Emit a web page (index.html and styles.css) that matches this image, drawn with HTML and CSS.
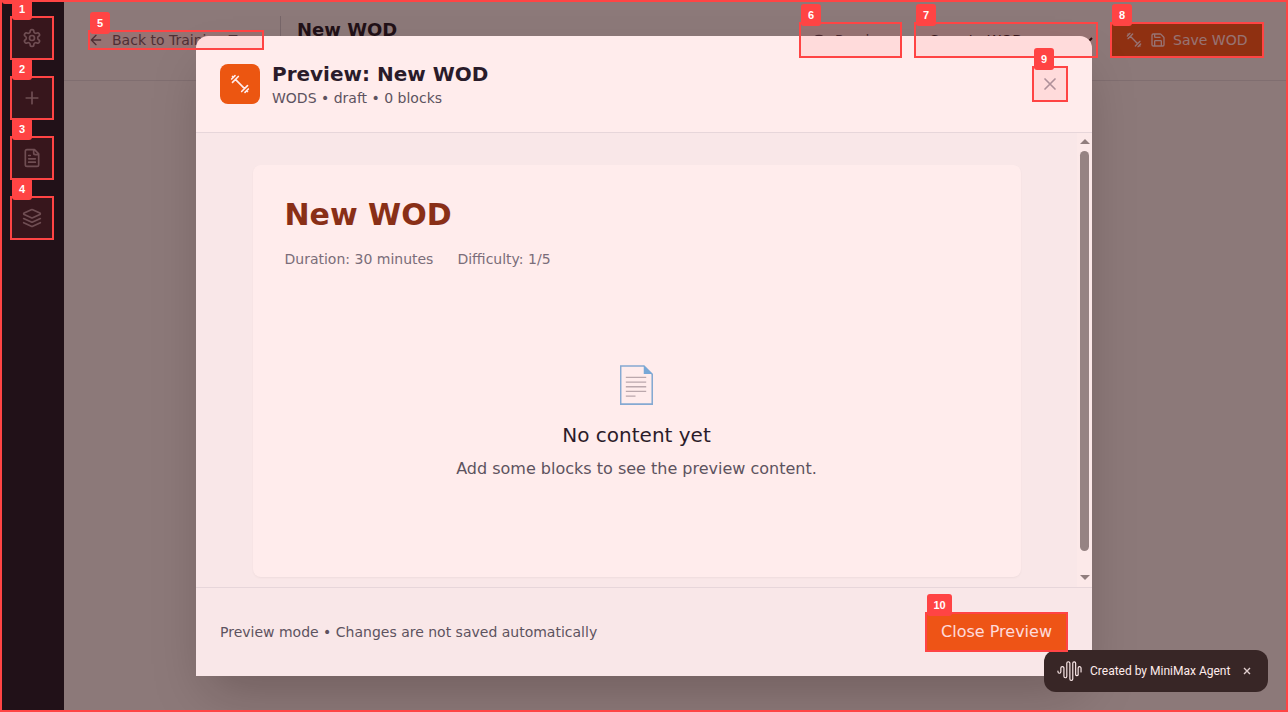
FILE: index.html
```html
<!DOCTYPE html>
<html lang="en">
<head>
<meta charset="utf-8">
<title>New WOD</title>
<link rel="stylesheet" href="styles.css">
</head>
<body>
<svg class="defs" width="0" height="0">
  <symbol id="dumbbell" viewBox="0 0 24 24"><path d="m6.5 6.5 11 11M21 21l-1-1M3 3l1 1M18 22l4-4M2 6l4-4M3 10l7-7M14 21l7-7"/></symbol>
  <symbol id="x" viewBox="0 0 24 24"><path d="M18 6 6 18M6 6l12 12"/></symbol>
</svg>
<div class="app">
  <nav class="sidebar">
    <button class="side-btn"><svg class="icon i20" viewBox="0 0 24 24"><path d="M12.22 2h-.44a2 2 0 0 0-2 2v.18a2 2 0 0 1-1 1.73l-.43.25a2 2 0 0 1-2 0l-.15-.08a2 2 0 0 0-2.73.73l-.22.38a2 2 0 0 0 .73 2.73l.15.1a2 2 0 0 1 1 1.72v.51a2 2 0 0 1-1 1.74l-.15.09a2 2 0 0 0-.73 2.73l.22.38a2 2 0 0 0 2.73.73l.15-.08a2 2 0 0 1 2 0l.43.25a2 2 0 0 1 1 1.73V20a2 2 0 0 0 2 2h.44a2 2 0 0 0 2-2v-.18a2 2 0 0 1 1-1.73l.43-.25a2 2 0 0 1 2 0l.15.08a2 2 0 0 0 2.73-.73l.22-.39a2 2 0 0 0-.73-2.73l-.15-.08a2 2 0 0 1-1-1.74v-.5a2 2 0 0 1 1-1.74l.15-.09a2 2 0 0 0 .73-2.73l-.22-.38a2 2 0 0 0-2.73-.73l-.15.08a2 2 0 0 1-2 0l-.43-.25a2 2 0 0 1-1-1.73V4a2 2 0 0 0-2-2z"/><circle cx="12" cy="12" r="3"/></svg></button>
    <button class="side-btn"><svg class="icon i20" viewBox="0 0 24 24"><path d="M5 12h14M12 5v14"/></svg></button>
    <button class="side-btn"><svg class="icon i20" viewBox="0 0 24 24"><path d="M15 2H6a2 2 0 0 0-2 2v16a2 2 0 0 0 2 2h12a2 2 0 0 0 2-2V7ZM14 2v4a2 2 0 0 0 2 2h4M10 9H8M16 13H8M16 17H8"/></svg></button>
    <button class="side-btn"><svg class="icon i20" viewBox="0 0 24 24"><path d="m12.83 2.18a2 2 0 0 0-1.66 0L2.6 6.08a1 1 0 0 0 0 1.83l8.58 3.91a2 2 0 0 0 1.66 0l8.58-3.9a1 1 0 0 0 0-1.83ZM22 17.65l-9.17 4.16a2 2 0 0 1-1.66 0L2 17.65M22 12.65l-9.17 4.16a2 2 0 0 1-1.66 0L2 12.65"/></svg></button>
  </nav>
  <div class="main">
    <header class="topbar">
      <a class="back"><svg class="icon i16" viewBox="0 0 24 24"><path d="m12 19-7-7 7-7M19 12H5"/></svg>Back to Training Types</a>
      <span class="divider"></span>
      <h1 class="page-title">New WOD</h1>
      <div class="actions">
        <button class="btn preview-btn"><svg class="icon i16" viewBox="0 0 24 24"><path d="M2 12s3-7 10-7 10 7 10 7-3 7-10 7-10-7-10-7Z"/><circle cx="12" cy="12" r="3"/></svg>Preview</button>
        <button class="btn select-btn">Save to WOD<svg class="chevron" viewBox="0 0 10 6"><path d="m1 1 4 4 4-4"/></svg></button>
        <button class="btn save-btn"><svg class="icon i16"><use href="#dumbbell"/></svg><svg class="icon i16" viewBox="0 0 24 24"><path d="M15.2 3a2 2 0 0 1 1.4.6l3.8 3.8a2 2 0 0 1 .6 1.4V19a2 2 0 0 1-2 2H5a2 2 0 0 1-2-2V5a2 2 0 0 1 2-2zM17 21v-7a1 1 0 0 0-1-1H8a1 1 0 0 0-1 1v7M7 3v4a1 1 0 0 0 1 1h7"/></svg><span class="save-label">Save WOD</span></button>
      </div>
    </header>
  </div>
</div>

<div class="backdrop">
  <section class="modal">
    <header class="modal-head">
      <span class="badge"><svg class="icon i20"><use href="#dumbbell"/></svg></span>
      <div class="modal-titles">
        <h2 class="modal-title">Preview: New WOD</h2>
        <p class="modal-sub">WODS • draft • 0 blocks</p>
      </div>
      <button class="close"><svg class="icon i20"><use href="#x"/></svg></button>
    </header>
    <div class="modal-body">
      <div class="content">
        <article class="card">
          <h3 class="wod-title">New WOD</h3>
          <div class="meta"><span>Duration: 30 minutes</span><span>Difficulty: 1/5</span></div>
          <div class="empty">
            <svg class="page-icon" viewBox="0 0 34 41"><path class="sheet" d="M.7 1h24l8.5 8.5v30.700H.7z"/><path class="fold" d="M24.500.5v8.700h9z"/><path class="rules" d="M6 12.700h21M6 17.500h21M6 22.300h21M6 27.100h21M6 31.900h10"/></svg>
            <h4 class="empty-title">No content yet</h4>
            <p class="empty-text">Add some blocks to see the preview content.</p>
          </div>
        </article>
      </div>
      <div class="scrollbar"><i class="arrow up"></i><i class="thumb"></i><i class="arrow down"></i></div>
    </div>
    <footer class="modal-foot">
      <span>Preview mode • Changes are not saved automatically</span>
      <button class="close-preview">Close Preview</button>
    </footer>
  </section>
</div>

<aside class="agent">
  <svg class="wave" viewBox="0 0 26 22"><path d="M1 11v.8a1.500 1.500 0 0 0 3 0V8a1.600 1.600 0 0 1 3.200 0v8.500a1.500 1.500 0 0 0 3 0V3a1.500 1.500 0 0 1 3.200 0v16.300a1.500 1.500 0 0 0 3 0V17M16.400 17V3a1.500 1.500 0 0 1 3 0v12a1.500 1.500 0 0 0 2.600 0V8a1.500 1.500 0 0 1 3 0v4"/></svg>
  <span>Created by MiniMax Agent</span>
  <svg class="agent-x" viewBox="0 0 8 8"><path d="m1 1 6 6M7 1 1 7"/></svg>
</aside>

<div class="marks">
  <div class="mark m0"><b></b></div>
  <div class="mark m1"><b>1</b></div>
  <div class="mark m2"><b>2</b></div>
  <div class="mark m3"><b>3</b></div>
  <div class="mark m4"><b>4</b></div>
  <div class="mark m5"><b>5</b></div>
  <div class="mark m6"><b>6</b></div>
  <div class="mark m7"><b>7</b></div>
  <div class="mark m8"><b>8</b></div>
  <div class="mark m9"><b>9</b></div>
  <div class="mark m10"><b>10</b></div>
</div>
</body>
</html>
```
FILE: styles.css
```css
* { box-sizing: border-box; margin: 0; }
body { font: 14px/20px "DejaVu Sans", sans-serif; color: #111827; height: 712px; overflow: hidden; position: relative; }
button { border: 0; background: none; padding: 0; font: inherit; color: inherit; }
.defs { position: absolute; }
.icon { fill: none; stroke: currentColor; stroke-width: 2; stroke-linecap: round; stroke-linejoin: round; flex: none; }
.i16 { width: 16px; height: 16px; }
.i20 { width: 20px; height: 20px; }

.app { display: flex; height: 712px; background: #fff; }
.sidebar { width: 64px; background: #111827; display: flex; flex-direction: column; align-items: center; gap: 16px; padding-top: 16px; }
.side-btn { width: 44px; height: 44px; display: grid; place-items: center; color: #9ca3af; }
.main { flex: 1; }
.topbar { height: 81px; border-bottom: 1px solid #e5e7eb; padding: 0 24px; display: flex; align-items: flex-start; white-space: nowrap; }
.back { display: flex; align-items: center; gap: 8px; width: 176px; height: 20px; margin-top: 30px; color: #4b5563; }
.divider { width: 1px; height: 48px; margin: 16px 16px 0; background: #d1d5db; }
.page-title { font-size: 18px; line-height: 28px; font-weight: 700; margin-top: 16px; }
.actions { margin: 22px 0 0 auto; display: flex; gap: 12px; }
.btn { height: 36px; display: flex; align-items: center; gap: 8px; padding: 0 12px; border-radius: 8px; }
.preview-btn { width: 103px; color: #374151; }
.select-btn { width: 184px; padding: 0 5px 0 16px; justify-content: space-between; }
.chevron { width: 10px; height: 6px; fill: none; stroke: #000; stroke-width: 2; }
.save-btn { width: 154px; padding: 0 0 0 16px; background: #ea580c; color: #fff; border-radius: 4px; }
.save-label { margin-left: -1px; }

.backdrop { position: absolute; inset: 0; background: rgba(0,0,0,.5); display: grid; place-items: center; }
.modal { width: 896px; height: 640px; background: #fff; border-radius: 12px 12px 0 0; display: flex; flex-direction: column; box-shadow: 0 25px 50px -12px rgba(0,0,0,.25); }
.modal-head { height: 97px; padding: 24px; border-bottom: 1px solid #e5e7eb; display: flex; align-items: center; gap: 12px; }
.badge { width: 40px; height: 40px; border-radius: 8px; background: #ea580c; color: #fff; display: grid; place-items: center; }
.modal-title { font-size: 20px; line-height: 28px; font-weight: 700; }
.modal-sub { color: #4b5563; }
.close { margin-left: auto; width: 36px; height: 36px; display: grid; place-items: center; color: #9ca3af; }
.modal-body { flex: 1; min-height: 0; display: flex; background: #f9fafb; }
.content { flex: 1; padding-top: 32px; display: flex; justify-content: center; }
.card { width: 768px; height: 412px; padding: 32px; background: #fff; border-radius: 8px; box-shadow: 0 1px 2px rgba(0,0,0,.05); }
.wod-title { font-size: 30px; line-height: 36px; font-weight: 700; color: #7c2d12; }
.meta { display: flex; gap: 24px; margin-top: 16px; color: #6b7280; }
.empty { margin-top: 96px; display: flex; flex-direction: column; align-items: center; }
.page-icon { width: 33px; height: 40px; fill: none; }
.sheet { stroke: #78b5e2; stroke-width: 1.600; }
.fold { fill: #68b4e8; }
.rules { stroke: #b4b4b9; stroke-width: 1.300; }
.empty-title { font-size: 20px; line-height: 28px; font-weight: 400; margin-top: 16px; }
.empty-text { font-size: 16px; line-height: 24px; color: #4b5563; margin-top: 8px; }
.scrollbar { width: 15px; background: #fcfcfc; display: flex; flex-direction: column; align-items: center; padding: 6px 0 7px; }
.arrow { border: 5px solid transparent; }
.up { border-top: 0; border-bottom-color: #858585; }
.down { border-bottom: 0; border-top-color: #858585; margin-top: auto; }
.thumb { width: 9px; height: 400px; margin-top: 7px; border-radius: 5px; background: #8b8b8b; }
.modal-foot { height: 89px; padding: 0 24px; border-top: 1px solid #e5e7eb; background: #f9fafb; display: flex; align-items: center; justify-content: space-between; color: #4b5563; }
.close-preview { width: 143px; height: 40px; background: #ea580c; color: #fff; border-radius: 4px; font-size: 16px; }

.agent { position: absolute; right: 20px; bottom: 20px; width: 224px; height: 42px; border-radius: 12px; background: #222323; color: #fff; display: flex; align-items: center; padding-left: 13px; font: 400 12px/16px Roboto, sans-serif; }
.wave { width: 25px; height: 22px; margin-right: 8px; fill: none; stroke: #fff; stroke-width: 1.200; stroke-linecap: round; }
.agent-x { width: 8px; height: 8px; margin-left: 13px; stroke: #ddd; stroke-width: 1.400; }

/* numbered element markers */
.marks { position: absolute; inset: 0; overflow: hidden; }
.mark { position: absolute; border: 2px solid #f44; background: rgba(255,68,68,.1); }
.mark b { position: absolute; left: 0; top: -20px; min-width: 20px; height: 22px; padding: 0 6.500px; border-radius: 3px; background: #f44; color: #fff; font: 700 11px/22px "Liberation Sans", Arial, sans-serif; text-align: center; }
.m0 { left: 0; top: 0; width: 1288px; height: 712px; }
.m1, .m2, .m3, .m4 { left: 10px; width: 44px; height: 44px; }
.m1 { top: 16px; }
.m2 { top: 76px; }
.m3 { top: 136px; }
.m4 { top: 196px; }
.m5 { left: 88px; top: 30px; width: 176px; height: 20px; }
.m6 { left: 799px; top: 22px; width: 103px; height: 36px; }
.m7 { left: 914px; top: 22px; width: 184px; height: 36px; }
.m8 { left: 1110px; top: 22px; width: 154px; height: 36px; }
.m9 { left: 1032px; top: 66px; width: 36px; height: 36px; }
.m10 { left: 925px; top: 612px; width: 143px; height: 40px; }
```
